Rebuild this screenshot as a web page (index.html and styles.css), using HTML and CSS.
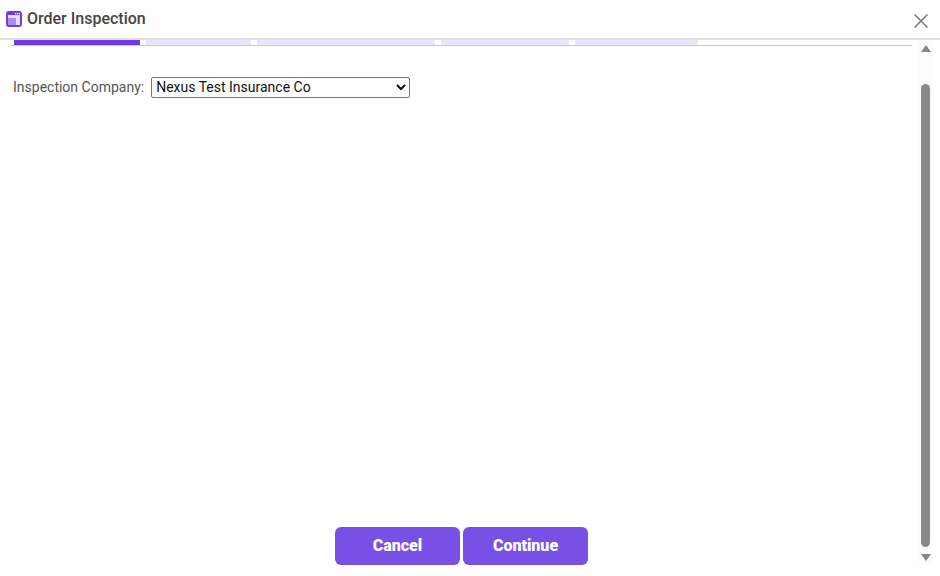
FILE: index.html
```html
<!DOCTYPE html>
<html>
<head>
  <meta charset="UTF-8">
  <title>Order Inspection</title>
  <link rel="stylesheet" href="styles.css">
</head>
<body>
  <div class="dialog">
    <div class="header">
      <svg class="logo" viewBox="0 0 16 16">
        <rect x="0" y="0" width="16" height="16" rx="3" fill="#6f3be8"/>
        <rect x="2" y="4" width="12" height="10" fill="#e6defb"/>
        <rect x="2" y="7" width="8" height="7" fill="#a98cf2"/>
        <rect x="9" y="2" width="1.3" height="1.3" fill="#fff"/>
        <rect x="11" y="2" width="1.3" height="1.3" fill="#fff"/>
        <rect x="13" y="2" width="1" height="1.3" fill="#fff"/>
      </svg>
      <h1 class="title">Order Inspection</h1>
      <span class="spacer"></span>
      <button class="close" aria-label="Close">
        <svg viewBox="0 0 14 14" fill="none" stroke="#808080" stroke-width="1.7">
          <line x1="0.5" y1="0.5" x2="13.5" y2="13.5"/>
          <line x1="13.5" y1="0.5" x2="0.5" y2="13.5"/>
        </svg>
      </button>
    </div>

    <div class="body">
      <div class="main">
        <div class="steps">
          <div class="step active step-1"></div>
          <div class="step step-2"></div>
          <div class="step step-3"></div>
          <div class="step step-4"></div>
          <div class="step step-5"></div>
        </div>

        <div class="field">
          <label class="field-label" for="company">Inspection Company:</label>
          <select class="field-select" id="company">
            <option>Nexus Test Insurance Co</option>
          </select>
        </div>

        <div class="actions">
          <button class="button">Cancel</button>
          <button class="button">Continue</button>
        </div>
      </div>

      <div class="scrollbar">
        <span class="arrow-up"></span>
        <div class="thumb"></div>
        <span class="arrow-down"></span>
      </div>
    </div>
  </div>
</body>
</html>
```

FILE: styles.css
```css
html, body {
  height: 100%;
}

body {
  margin: 0;
  background: white;
  font-family: Roboto, "Liberation Sans", sans-serif;
  color: #444;
  overflow: hidden;
}

.dialog {
  display: flex;
  flex-direction: column;
  height: 576px;
}

.header {
  display: flex;
  align-items: center;
  gap: 5px;
  height: 38px;
  padding: 0 12px 0 6px;
  border-bottom: 2px solid #e1e1e1;
}

.logo {
  width: 16px;
  height: 16px;
  flex-shrink: 0;
}

.title {
  margin: 0 0 2px;
  font-size: 16px;
  font-weight: 500;
  color: #444;
}

.spacer {
  flex: 1;
}

.close {
  width: 14px;
  height: 14px;
  padding: 0;
  margin-top: 4px;
  border: none;
  background: none;
}

.close svg {
  display: block;
  width: 14px;
  height: 14px;
  overflow: visible;
}

.body {
  display: flex;
  height: 526px;
}

.main {
  flex: 1;
  display: flex;
  flex-direction: column;
  min-width: 0;
  padding-left: 11px;
  padding-right: 6px;
}

.steps {
  display: flex;
  gap: 6px;
  height: 5px;
  padding-left: 3px;
  border-bottom: 1px solid #c9c5e6;
}

.step {
  background: #e8e6fa;
}

.step.active {
  background: #6f3be8;
}

.step-1 { width: 126px; }
.step-2 { width: 105px; }
.step-3 { width: 178px; }
.step-4 { width: 128px; }
.step-5 { width: 123px; }

.field {
  display: flex;
  align-items: center;
  gap: 7px;
  margin-top: 31px;
  padding-left: 2px;
}

.field-label {
  margin-bottom: 2px;
  font-size: 14px;
  color: #555;
}

.field-select {
  width: 259px;
  height: 21px;
  padding: 0 0 2px;
  font-family: Roboto, "Liberation Sans", sans-serif;
  font-size: 14px;
  color: #111;
  background: white;
  border: 1px solid #767676;
  border-radius: 2px;
}

.actions {
  display: flex;
  justify-content: center;
  gap: 3px;
  margin-top: auto;
  margin-bottom: 1px;
}

.button {
  width: 125px;
  height: 38px;
  padding: 0 0 2px;
  border: none;
  border-radius: 6px;
  background: #7750e6;
  color: white;
  font-family: Roboto, "Liberation Sans", sans-serif;
  font-size: 16px;
  font-weight: 900;
}

.scrollbar {
  display: flex;
  flex-direction: column;
  align-items: center;
  width: 15px;
  height: 524px;
  margin-right: 7px;
  background: #fcfcfc;
}

.arrow-up {
  width: 0;
  height: 0;
  margin-top: 5px;
  border-left: 5px solid transparent;
  border-right: 5px solid transparent;
  border-bottom: 7px solid #868686;
}

.arrow-down {
  width: 0;
  height: 0;
  margin-top: 7px;
  border-left: 5px solid transparent;
  border-right: 5px solid transparent;
  border-top: 7px solid #868686;
}

.thumb {
  width: 9px;
  height: 463px;
  margin-top: 32px;
  border-radius: 5px;
  background: #8a8a8a;
}
```
